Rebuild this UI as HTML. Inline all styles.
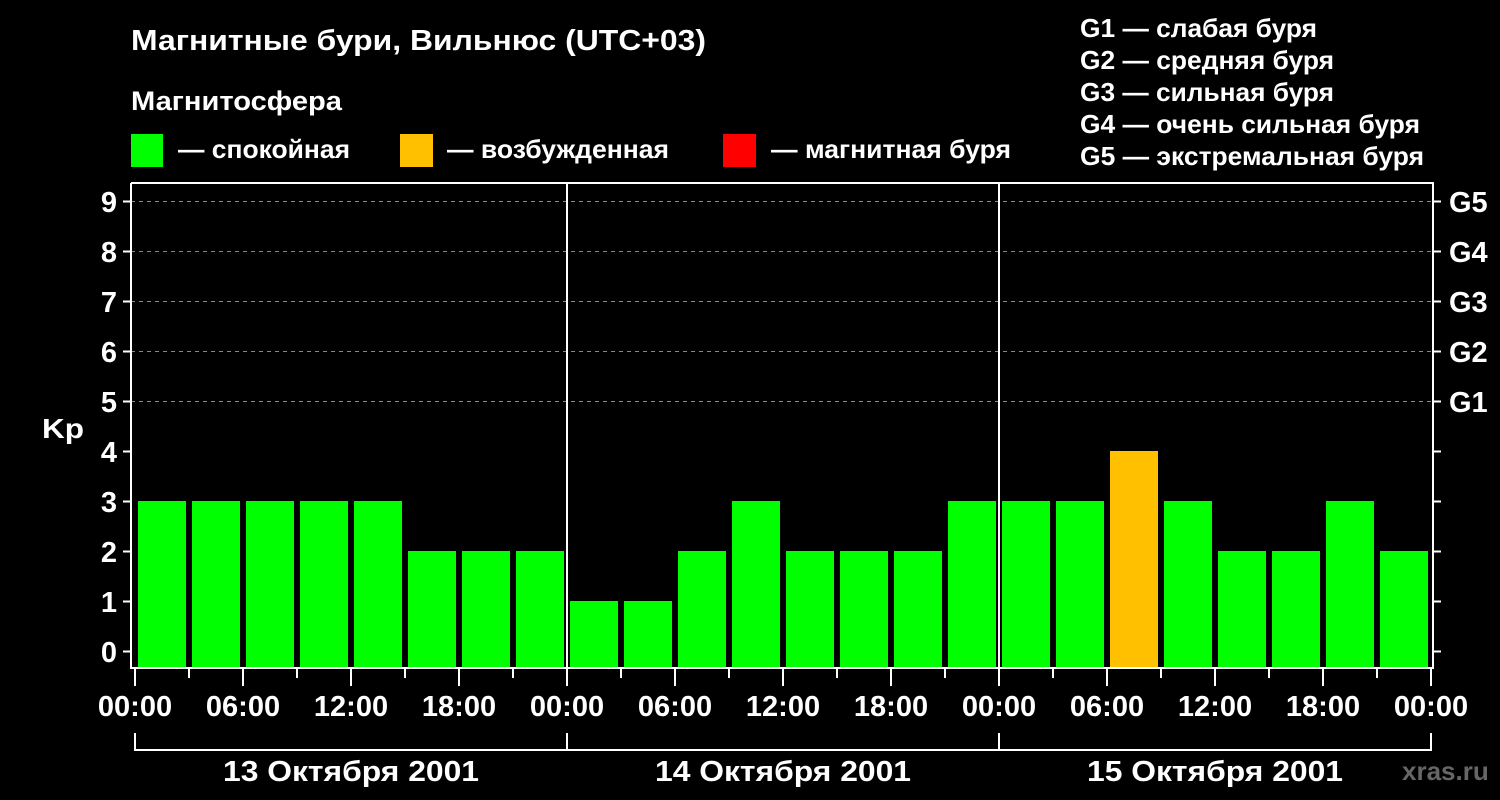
<!DOCTYPE html><html><head><meta charset="utf-8"><style>body{margin:0;background:#000}svg{display:block}text{font-family:"Liberation Sans",sans-serif;font-weight:bold;fill:#fff}</style></head><body>
<svg width="1500" height="800" xmlns="http://www.w3.org/2000/svg">
<rect width="1500" height="800" fill="#000"/>
<text x="131" y="50" font-size="29" textLength="575" lengthAdjust="spacingAndGlyphs">Магнитные бури, Вильнюс (UTC+03)</text>
<text x="131" y="110" font-size="27" textLength="211" lengthAdjust="spacingAndGlyphs">Магнитосфера</text>
<rect x="131" y="134" width="32" height="33" fill="#00ff00"/><text x="178" y="158" font-size="26" textLength="172" lengthAdjust="spacingAndGlyphs">— спокойная</text>
<rect x="400" y="134" width="33" height="33" fill="#ffc000"/><text x="447" y="158" font-size="26" textLength="222" lengthAdjust="spacingAndGlyphs">— возбужденная</text>
<rect x="723" y="134" width="33" height="33" fill="#ff0000"/><text x="771" y="158" font-size="26" textLength="240" lengthAdjust="spacingAndGlyphs">— магнитная буря</text>
<g font-size="26"><text x="1080" y="37" textLength="237" lengthAdjust="spacingAndGlyphs">G1 — слабая буря</text><text x="1080" y="69" textLength="254" lengthAdjust="spacingAndGlyphs">G2 — средняя буря</text><text x="1080" y="101" textLength="254" lengthAdjust="spacingAndGlyphs">G3 — сильная буря</text><text x="1080" y="133" textLength="340" lengthAdjust="spacingAndGlyphs">G4 — очень сильная буря</text><text x="1080" y="165" textLength="344" lengthAdjust="spacingAndGlyphs">G5 — экстремальная буря</text></g>
<g stroke="#888" stroke-dasharray="4,4" stroke-width="1"><line x1="131" y1="201.5" x2="1433" y2="201.5"/><line x1="131" y1="251.5" x2="1433" y2="251.5"/><line x1="131" y1="301.5" x2="1433" y2="301.5"/><line x1="131" y1="351.5" x2="1433" y2="351.5"/><line x1="131" y1="401.5" x2="1433" y2="401.5"/></g>
<g>
<rect x="138" y="501" width="48" height="167" fill="#00ff00"/>
<rect x="192" y="501" width="48" height="167" fill="#00ff00"/>
<rect x="246" y="501" width="48" height="167" fill="#00ff00"/>
<rect x="300" y="501" width="48" height="167" fill="#00ff00"/>
<rect x="354" y="501" width="48" height="167" fill="#00ff00"/>
<rect x="408" y="551" width="48" height="117" fill="#00ff00"/>
<rect x="462" y="551" width="48" height="117" fill="#00ff00"/>
<rect x="516" y="551" width="48" height="117" fill="#00ff00"/>
<rect x="570" y="601" width="48" height="67" fill="#00ff00"/>
<rect x="624" y="601" width="48" height="67" fill="#00ff00"/>
<rect x="678" y="551" width="48" height="117" fill="#00ff00"/>
<rect x="732" y="501" width="48" height="167" fill="#00ff00"/>
<rect x="786" y="551" width="48" height="117" fill="#00ff00"/>
<rect x="840" y="551" width="48" height="117" fill="#00ff00"/>
<rect x="894" y="551" width="48" height="117" fill="#00ff00"/>
<rect x="948" y="501" width="48" height="167" fill="#00ff00"/>
<rect x="1002" y="501" width="48" height="167" fill="#00ff00"/>
<rect x="1056" y="501" width="48" height="167" fill="#00ff00"/>
<rect x="1110" y="451" width="48" height="217" fill="#ffc000"/>
<rect x="1164" y="501" width="48" height="167" fill="#00ff00"/>
<rect x="1218" y="551" width="48" height="117" fill="#00ff00"/>
<rect x="1272" y="551" width="48" height="117" fill="#00ff00"/>
<rect x="1326" y="501" width="48" height="167" fill="#00ff00"/>
<rect x="1380" y="551" width="48" height="117" fill="#00ff00"/>
</g>
<g stroke="#fff" stroke-width="2" fill="none">
<path d="M131 183V668H1433V183H131"/>
<line x1="567" y1="183" x2="567" y2="668"/><line x1="999" y1="183" x2="999" y2="668"/>
<path d="M135 733V750H1431V733M567 733V750M999 733V750"/>
<path d="M135 668V686M189 668V678M243 668V686M297 668V678M351 668V686M405 668V678M459 668V686M513 668V678M567 668V686M621 668V678M675 668V686M729 668V678M783 668V686M837 668V678M891 668V686M945 668V678M999 668V686M1053 668V678M1107 668V686M1161 668V678M1215 668V686M1269 668V678M1323 668V686M1377 668V678M1431 668V686"/>
<path d="M123 651.5H131M123 601.5H131M123 551.5H131M123 501.5H131M123 451.5H131M123 401.5H131M123 351.5H131M123 301.5H131M123 251.5H131M123 201.5H131"/>
<path d="M1433 651.5H1441M1433 601.5H1441M1433 551.5H1441M1433 501.5H1441M1433 451.5H1441M1433 401.5H1441M1433 351.5H1441M1433 301.5H1441M1433 251.5H1441M1433 201.5H1441"/>
</g>
<g font-size="29" text-anchor="end"><text x="117" y="662">0</text><text x="117" y="612">1</text><text x="117" y="562">2</text><text x="117" y="512">3</text><text x="117" y="462">4</text><text x="117" y="412">5</text><text x="117" y="362">6</text><text x="117" y="312">7</text><text x="117" y="262">8</text><text x="117" y="212">9</text></g>
<text x="42" y="438" font-size="28" textLength="42" lengthAdjust="spacingAndGlyphs">Kp</text>
<g font-size="29"><text x="1449" y="212">G5</text><text x="1449" y="262">G4</text><text x="1449" y="312">G3</text><text x="1449" y="362">G2</text><text x="1449" y="412">G1</text></g>
<g font-size="29" text-anchor="middle">
<text x="135" y="716">00:00</text><text x="243" y="716">06:00</text><text x="351" y="716">12:00</text><text x="459" y="716">18:00</text><text x="567" y="716">00:00</text><text x="675" y="716">06:00</text><text x="783" y="716">12:00</text><text x="891" y="716">18:00</text><text x="999" y="716">00:00</text><text x="1107" y="716">06:00</text><text x="1215" y="716">12:00</text><text x="1323" y="716">18:00</text><text x="1431" y="716">00:00</text>
</g>
<g font-size="29" text-anchor="middle"><text x="351" y="781" textLength="256" lengthAdjust="spacingAndGlyphs">13 Октября 2001</text><text x="783" y="781" textLength="256" lengthAdjust="spacingAndGlyphs">14 Октября 2001</text><text x="1215" y="781" textLength="256" lengthAdjust="spacingAndGlyphs">15 Октября 2001</text></g>
<text x="1402" y="780" font-size="26" style="fill:#666">xras.ru</text>
</svg></body></html>
